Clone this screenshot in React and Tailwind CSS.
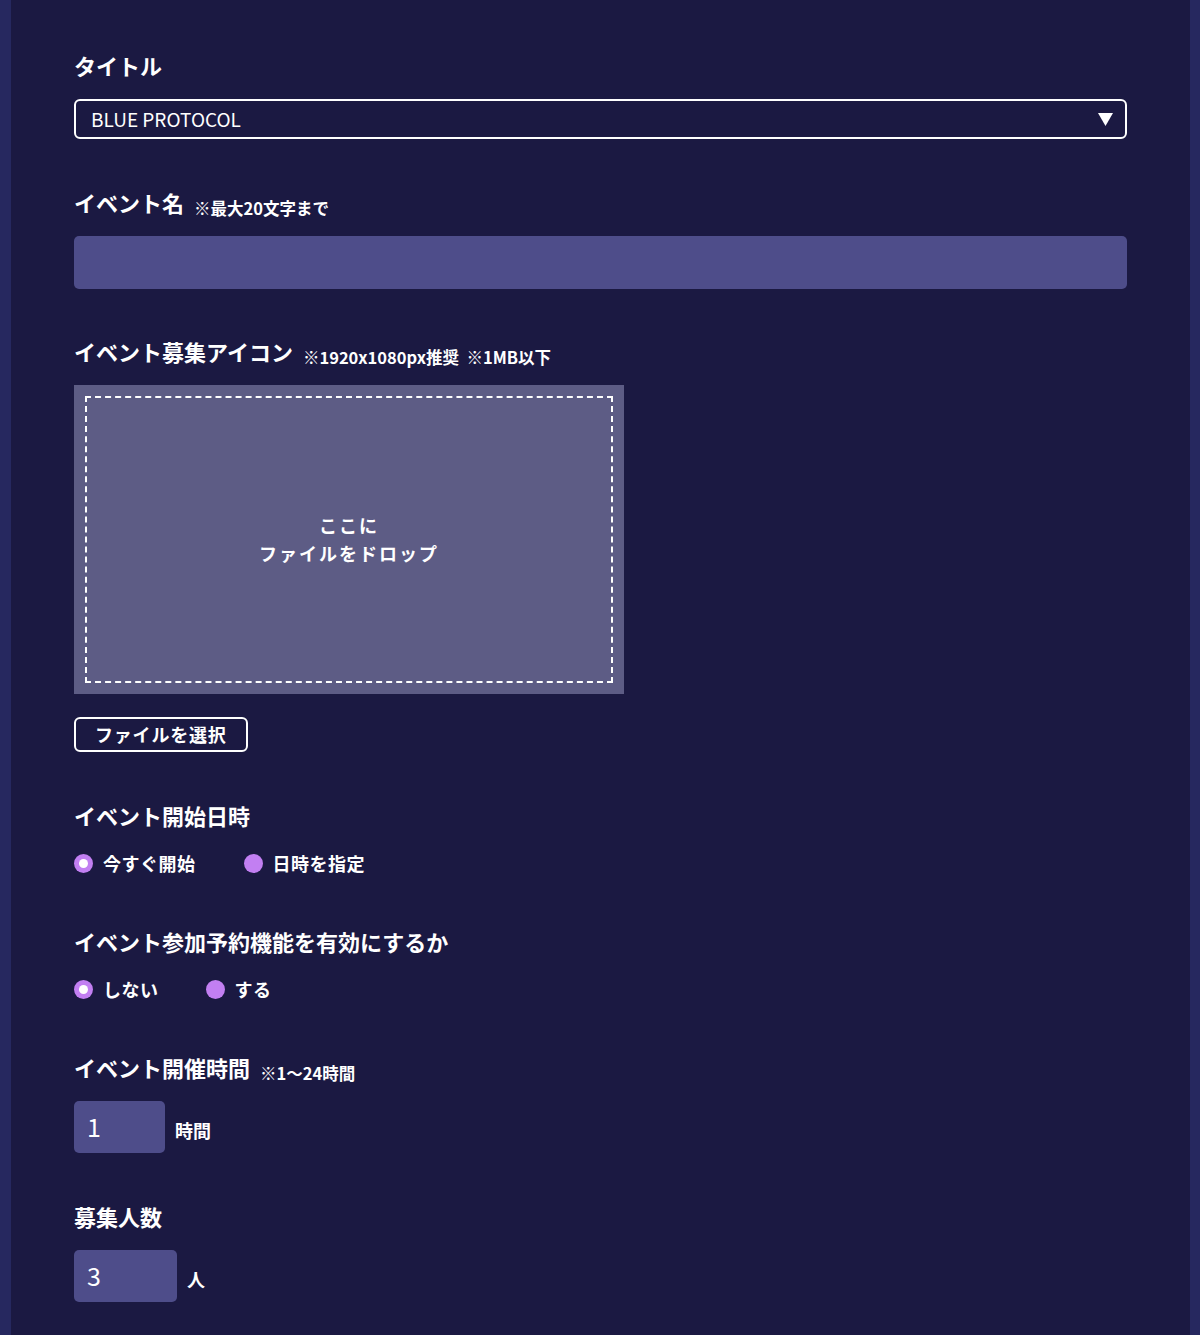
const font = { fontFamily: '"Noto Sans CJK JP", "Noto Sans", sans-serif' };

const Label = ({ children, note, className = "" }) => (
  <div className={`flex items-start gap-[10px] h-[32px] ${className}`}>
    <span className="text-[22px] font-bold text-white leading-[28px]">{children}</span>
    {note && (
      <span className="text-[16.5px] font-bold text-white leading-[28px] mt-[6px] whitespace-pre">
        {note}
      </span>
    )}
  </div>
);

const Radio = ({ checked, label }) => (
  <label className="flex items-center gap-[10px] h-[24px]">
    <span className="w-[19px] h-[19px] rounded-full bg-[#c27ff2] flex items-center justify-center">
      {checked && <span className="w-[9px] h-[9px] rounded-full bg-white" />}
    </span>
    <span className="text-[18px] font-bold text-white tracking-[0.5px]">{label}</span>
  </label>
);

const NumberBox = ({ value, unit, width }) => (
  <div className="mt-[16px] flex items-center gap-[10px]">
    <div
      className={`${width} h-[52px] rounded-[5px] bg-[#4e4d8a] flex items-center pl-[13px] text-[25px] text-white`}
    >
      {value}
    </div>
    <span className="text-[18px] font-bold text-white pt-[6px]">{unit}</span>
  </div>
);

export default function App() {
  return (
    <div className="flex min-h-[1335px] bg-[#1b1942]" style={font}>
      <div className="w-[11px] bg-[#26285f]" />
      <main className="flex-1 pl-[63px] pr-[62px] pt-[51px]">
        <div className="w-[1053px]">
          <Label>タイトル</Label>
          <div className="mt-[16px] h-[40px] border-2 border-white rounded-[6px] flex items-center justify-between pl-[15px] pr-[12px]">
            <span className="text-[19px] text-white">BLUE PROTOCOL</span>
            <svg width="15" height="13" viewBox="0 0 15 13">
              <path d="M0 0 H15 L7.5 13 Z" fill="#fff" />
            </svg>
          </div>

          <Label note="※最大20文字まで" className="mt-[49px]">イベント名</Label>
          <div className="mt-[16px] h-[53px] rounded-[5px] bg-[#4e4d8a]" />

          <Label note="※1920x1080px推奨  ※1MB以下" className="mt-[48px]">
            イベント募集アイコン
          </Label>
          <div className="mt-[16px] w-[550px] h-[309px] bg-[#5d5c85] p-[11px]">
            <div className="w-full h-full border-2 border-dashed border-white flex flex-col items-center justify-center text-white text-[18px] font-bold tracking-[2px] leading-[28px] pb-[2px]">
              <span>ここに</span>
              <span>ファイルをドロップ</span>
            </div>
          </div>
          <button className="mt-[23px] h-[35px] px-[19px] border-2 border-white rounded-[6px] text-white text-[18px] font-bold tracking-[0.8px] flex items-center">
            ファイルを選択
          </button>

          <Label className="mt-[49px]">イベント開始日時</Label>
          <div className="mt-[18px] flex gap-[48px]">
            <Radio checked label="今すぐ開始" />
            <Radio label="日時を指定" />
          </div>

          <Label className="mt-[52px]">イベント参加予約機能を有効にするか</Label>
          <div className="mt-[18px] flex gap-[47px]">
            <Radio checked label="しない" />
            <Radio label="する" />
          </div>

          <Label note="※1〜24時間" className="mt-[52px]">イベント開催時間</Label>
          <NumberBox value="1" unit="時間" width="w-[91px]" />

          <Label className="mt-[49px]">募集人数</Label>
          <NumberBox value="3" unit="人" width="w-[103px]" />
        </div>
      </main>
      <div className="w-[10px] bg-[#26285f]" />
    </div>
  );
}
